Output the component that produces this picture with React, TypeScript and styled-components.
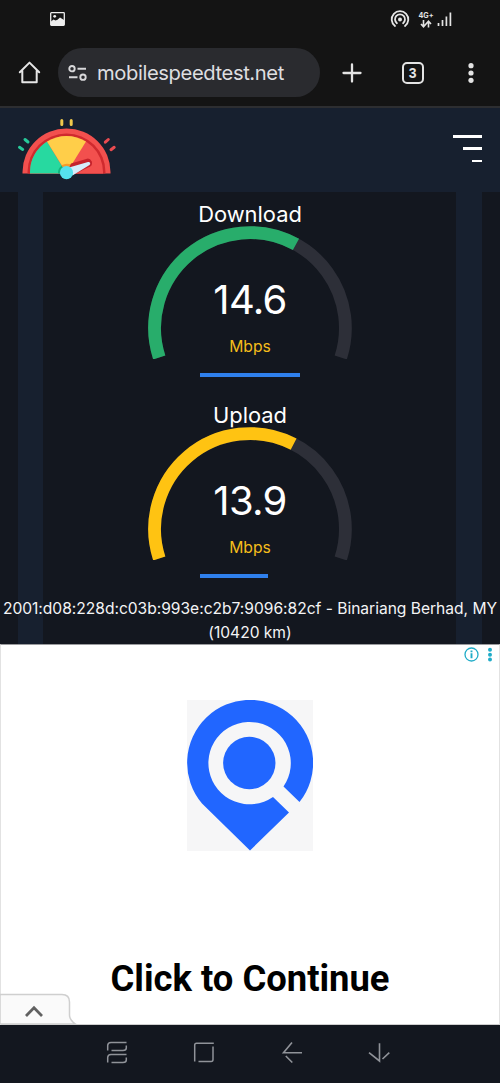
import React from "react";
import styled, { createGlobalStyle } from "styled-components";

const GlobalStyle = createGlobalStyle`
  * { box-sizing: border-box; }
  body { margin: 0; background: #13171f; font-family: Inter, "Liberation Sans", sans-serif; }
  svg { display: block; flex: none; }
`;

const Screen = styled.div`
  width: 500px;
  height: 1083px;
  display: flex;
  flex-direction: column;
  overflow: hidden;
  background: #13171f;
`;

const StatusBar = styled.div`
  height: 38px;
  flex: none;
  display: flex;
  align-items: center;
  padding: 0 48px 0 50px;
  background: #141414;
`;

const StatusIcons = styled.div`
  margin-left: auto;
  display: flex;
  align-items: center;
`;

const Network = styled.div`
  width: 16px;
  margin: 2px 3px 0 8px;
  display: flex;
  flex-direction: column;
  align-items: center;
  font: 700 7.2px/8px Inter, sans-serif;
  color: #e4e4e4;
`;

const BrowserBar = styled.div`
  height: 70px;
  flex: none;
  display: flex;
  align-items: center;
  padding-top: 1px;
  background: #141414;
  border-bottom: 2px solid #2d2e31;
`;

const HomeSlot = styled.div`
  width: 58px;
  padding-left: 18px;
`;

const AddressPill = styled.div`
  width: 262px;
  height: 49px;
  border-radius: 25px;
  background: #2a2b2f;
  display: flex;
  align-items: center;
  padding-left: 10px;
  gap: 9px;
`;

const Address = styled.span`
  font: 400 20.2px/30px Inter, sans-serif;
  letter-spacing: -0.4px;
  color: #dedee0;
  white-space: nowrap;
`;

const BrowserActions = styled.div`
  flex: 1;
  display: flex;
  align-items: center;
  padding: 0 22px 0 21.5px;
  justify-content: space-between;
`;

const TabCount = styled.div`
  width: 22px;
  height: 22px;
  margin-left: 14px;
  margin-right: 14px;
  border: 2px solid #e3e3e3;
  border-radius: 5px;
  color: #e3e3e3;
  font: 700 14px/18.5px "Liberation Sans", sans-serif;
  text-align: center;
`;

const SiteHeader = styled.header`
  height: 84px;
  flex: none;
  display: flex;
  justify-content: space-between;
  align-items: flex-start;
  padding: 8px 18px 0 16px;
  background: #17202f;
`;

const MenuLines = styled.div`
  display: flex;
  flex-direction: column;
  align-items: flex-end;
  gap: 9.5px;
  padding-top: 19px;
`;

const MenuLine = styled.i<{ $w: number }>`
  width: ${(p) => p.$w}px;
  height: 2.8px;
  background: #fff;
`;

const Results = styled.main`
  height: 452px;
  flex: none;
  display: flex;
  flex-direction: column;
  align-items: center;
  background: linear-gradient(90deg, #13171f 18px, #17202f 18px 43.5px, #13171f 43.5px 456.5px, #17202f 456.5px 482px, #13171f 482px);
`;

const Meter = styled.section`
  width: 204px;
  height: 201px;
  display: flex;
  flex-direction: column;
`;

const MeterTitle = styled.h2`
  margin: 0;
  padding-top: 8px;
  height: 34px;
  font: 400 21.9px/28px Inter, sans-serif;
  color: #fff;
  text-align: center;
`;

const Dial = styled.div`
  display: grid;
  height: 133px;
  & > * { grid-area: 1 / 1; }
`;

const Reading = styled.div`
  display: flex;
  flex-direction: column;
  align-items: center;
  padding-top: 49px;
`;

const Value = styled.span`
  font: 400 40px/50px Inter, sans-serif;
  color: #fff;
  letter-spacing: -0.7px;
`;

const Unit = styled.span`
  margin-top: 12px;
  font: 400 15.7px/20px Inter, sans-serif;
  color: #f5bd1b;
`;

const Track = styled.div`
  width: 100px;
  margin: 13.5px 0 0 52px;
`;

const Progress = styled.div<{ $w: number }>`
  width: ${(p) => p.$w}px;
  height: 4.5px;
  background: #2f80ed;
`;

const Server = styled.p`
  margin: 3px 0 0;
  width: 500px;
  text-align: center;
  font: 400 15.6px/23.5px Inter, sans-serif;
  letter-spacing: -0.02px;
  color: #f4f4f5;
  white-space: nowrap;
`;

const Ad = styled.section`
  height: 381px;
  flex: none;
  display: flex;
  flex-direction: column;
  align-items: center;
  background: #fff;
  border: 1px solid #e2e2e2;
  border-top-color: #9a9b9e;
  border-bottom: 1px solid #cfcfcf;
`;

const AdControls = styled.div`
  align-self: flex-end;
  height: 55px;
  flex: none;
  display: flex;
  gap: 8px;
  padding: 2px 6px 0 0;
`;

const AdTitle = styled.h1`
  margin: 103px 0 0;
  height: 50px;
  flex: none;
  font: 700 36.4px/50px Roboto, sans-serif;
  color: #000;
  white-space: nowrap;
`;

const ExpandTab = styled.div`
  align-self: flex-start;
  margin: -11px 0 0 -1px;
`;

const NavBar = styled.nav`
  flex: 1;
  display: flex;
  align-items: flex-start;
  padding: 15px 109px 0 105px;
  justify-content: space-between;
  background: #13171f;
`;

const CX = 102;
const CY = 102;
const R = 95.4;
const point = (deg: number) => {
  const a = (deg * Math.PI) / 180;
  return `${CX + R * Math.cos(a)} ${CY - R * Math.sin(a)}`;
};
const arc = (from: number, to: number) =>
  `M${point(from)}A${R} ${R} 0 ${from - to > 180 ? 1 : 0} 1 ${point(to)}`;

type MeterProps = { title: string; value: string; color: string; end: number; bar: number };

const SpeedMeter = ({ title, value, color, end, bar }: MeterProps) => (
  <Meter>
    <MeterTitle>{title}</MeterTitle>
    <Dial>
      <svg width="204" height="133" fill="none" strokeWidth="12.8">
        <path d={arc(198, -18)} stroke="#2d2f38" />
        <path d={arc(198, end)} stroke={color} />
      </svg>
      <Reading>
        <Value>{value}</Value>
        <Unit>Mbps</Unit>
      </Reading>
    </Dial>
    <Track>
      <Progress $w={bar} />
    </Track>
  </Meter>
);

const Logo = () => (
  <svg width="102" height="66" viewBox="16 116 102 66">
    <path d="M22.500 173.500V172a44 43.500 0 0 1 88 0v1.500z" fill="#f2504e" />
    <path d="M27.500 173.500V172a39 38.500 0 0 1 78 0v1.500z" fill="#cf2a2e" />
    <path d="M30 173.500V172a36.500 36 0 0 1 73 0v1.500z" fill="#f2504e" />
    <path d="M30 173.500V172a36.500 36 0 0 1 17-30.500L66.500 173.500z" fill="#27d9a0" />
    <path d="M47 141.500a36.500 36 0 0 1 39 0L66.500 173z" fill="#ffce49" />
    <path d="M58 173.500a8.800 8.800 0 0 1 4-8l4.500 7.500z" fill="#11b47d" />
    <path d="M61.500 165.300q5-3 10.500-.3L66.500 173z" fill="#f59b2b" />
    <path d="M71 163.500l16-4.800a4.300 4.300 0 0 1 3.500 7.500L76 173.500H66.500z" fill="#c5222b" />
    <path d="M69 167.500l19-5.500a1.700 1.700 0 0 1 1.500 3L72.500 175.500z" fill="#d4edfb" />
    <circle cx="66.500" cy="172.700" r="6.600" fill="#55e1ee" />
    <g fill="none" strokeWidth="3" strokeLinecap="round">
      <path d="M61.800 120.500v4M71.200 120.500v4" stroke="#f0c94b" />
      <path d="M25 139.500l3 2.500M19.500 147.300l3.200 2.200" stroke="#27c99a" />
      <path d="M105.300 142.200l3-2.700M111 149.700l3.200-2.400" stroke="#e94b50" />
    </g>
  </svg>
);

const App = () => (
  <Screen>
    <GlobalStyle />
    <StatusBar>
      <svg width="15" height="14" viewBox="0 0 15 14">
        <rect x=".7" y=".7" width="13.600" height="12.600" rx=".7" fill="none" stroke="#eee" strokeWidth="1.300" />
        <path d="M1 9.500l2.500-2 2 1 2-.8 2.500-2.200L14 8v5H1z" fill="#eee" />
        <circle cx="4.700" cy="4.300" r="1.400" fill="#eee" />
      </svg>
      <StatusIcons>
        <svg width="20" height="18" viewBox="0 0 20 18" fill="none" stroke="#e6e6e6" strokeWidth="1.800" strokeLinecap="round">
          <path d="M5 16A8.300 8.300 0 1 1 15 16" />
          <path d="M6.900 13.200a5 5 0 1 1 6.200 0" />
          <circle cx="10" cy="9.500" r="2" fill="#e6e6e6" stroke="none" />
        </svg>
        <Network>
          4G+
          <svg width="12" height="8" viewBox="0 0 12 8" fill="none" stroke="#e4e4e4" strokeWidth="1.600">
            <path d="M3.500 0v6M1 4l2.500 2.700L6 4M8.500 7.500V1.500M6 4l2.500-2.700L11 4" />
          </svg>
        </Network>
        <svg width="15" height="15" viewBox="0 0 15 15" stroke="#e4e4e4" strokeWidth="1.700">
          <path d="M1.500 11v3M5.500 8v6M9.400 4.500V14M13.400.5V14" />
        </svg>
      </StatusIcons>
    </StatusBar>
    <BrowserBar>
      <HomeSlot>
        <svg width="23" height="23" viewBox="0 0 23 23" fill="none" stroke="#e6e6e6" strokeWidth="2" strokeLinejoin="round" strokeLinecap="round">
          <path d="M1.800 11.200L11.500 1.600l9.700 9.600M4.300 9.500v11.700h14.400V9.500" />
        </svg>
      </HomeSlot>
      <AddressPill>
        <svg width="20" height="16" viewBox="0 0 20 16" fill="none" stroke="#d8d8da" strokeWidth="1.900">
          <circle cx="4" cy="3.700" r="2.700" />
          <path d="M9.500 3.700h8.500M1 12.200h8.500" />
          <circle cx="15" cy="12.200" r="2.700" />
        </svg>
        <Address>mobilespeedtest.net</Address>
      </AddressPill>
      <BrowserActions>
        <svg width="20" height="20" viewBox="0 0 20 20" stroke="#e3e3e3" strokeWidth="2.300" strokeLinecap="round">
          <path d="M10 1.500v17M1.500 10h17" />
        </svg>
        <TabCount>3</TabCount>
        <svg width="14" height="22" viewBox="0 0 14 22" fill="#e3e3e3">
          <circle cx="7" cy="3.700" r="2.600" />
          <circle cx="7" cy="11" r="2.600" />
          <circle cx="7" cy="18.300" r="2.600" />
        </svg>
      </BrowserActions>
    </BrowserBar>
    <SiteHeader>
      <Logo />
      <MenuLines>
        <MenuLine $w={29} />
        <MenuLine $w={19.5} />
        <MenuLine $w={10} />
      </MenuLines>
    </SiteHeader>
    <Results>
      <SpeedMeter title="Download" value="14.6" color="#28ad6b" end={61.2} bar={100} />
      <SpeedMeter title="Upload" value="13.9" color="#ffc312" end={62.8} bar={67.5} />
      <Server>
        2001:d08:228d:c03b:993e:c2b7:9096:82cf - Binariang Berhad, MY
        <br />
        (10420 km)
      </Server>
    </Results>
    <Ad>
      <AdControls>
        <svg width="15" height="15" viewBox="0 0 15 15" fill="none" stroke="#20acc8">
          <circle cx="7.500" cy="7.500" r="6.500" strokeWidth="1.300" />
          <path d="M7.500 6.300v5M7.500 3.400v1.800" strokeWidth="1.900" />
        </svg>
        <svg width="6" height="15" viewBox="0 0 6 15" fill="#20acc8">
          <circle cx="3" cy="2.800" r="2" />
          <circle cx="3" cy="7.700" r="2" />
          <circle cx="3" cy="12.500" r="2" />
        </svg>
      </AdControls>
      <svg width="126" height="151" viewBox="0 0 126 151">
        <rect width="126" height="151" fill="#f6f6f7" />
        <path d="M63 150.500L15 103.500A63 63 0 1 1 112.500 102L96.500 86.500A41.200 41.200 0 1 0 86 97L102 112.500z" fill="#2166ff" />
        <circle cx="62.300" cy="63" r="26.200" fill="#2166ff" />
      </svg>
      <AdTitle>Click to Continue</AdTitle>
      <ExpandTab>
        <svg width="80" height="31" viewBox="0 0 80 31">
          <path d="M0 1.500H62q7.500 0 7.500 7.500v13q0 5 6 9H0z" fill="#fafafa" stroke="#cfcfcf" strokeWidth="1.500" />
          <path d="M26 23l8-8.300 8 8.300" fill="none" stroke="#616161" strokeWidth="2.700" />
        </svg>
      </ExpandTab>
    </Ad>
    <NavBar>
      <svg width="24" height="25" viewBox="0 0 24 25" fill="none" stroke="#909399" strokeWidth="1.500">
        <path d="M21.500 2.500H6q-3.300 0-3.300 3v5M6.500 10.500H18q3.300 0 3.300-2.500V5.500M21.500 14.500H6q-3.300 0-3.300 3v5M6.500 22.500H18q3.300 0 3.300-2.500v-2.500" />
      </svg>
      <svg width="24" height="25" viewBox="0 0 24 25" fill="none" stroke="#909399" strokeWidth="1.500">
        <path d="M21.800 3.200H4.500q-1.800 0-1.800 1.800V21.500M21 6.500V19.500q0 2-1.800 2H6.500" />
      </svg>
      <svg width="24" height="25" viewBox="0 0 24 25" fill="none" stroke="#909399" strokeWidth="1.600">
        <path d="M22 12.700H3.500L12 2.500M5.800 16l6.500 6.500" />
      </svg>
      <svg width="24" height="25" viewBox="0 0 24 25" fill="none" stroke="#909399" strokeWidth="1.600">
        <path d="M12.500 3.200V21L2 12.700M15.500 19l6.800-6.300" />
      </svg>
    </NavBar>
  </Screen>
);

export default App;
